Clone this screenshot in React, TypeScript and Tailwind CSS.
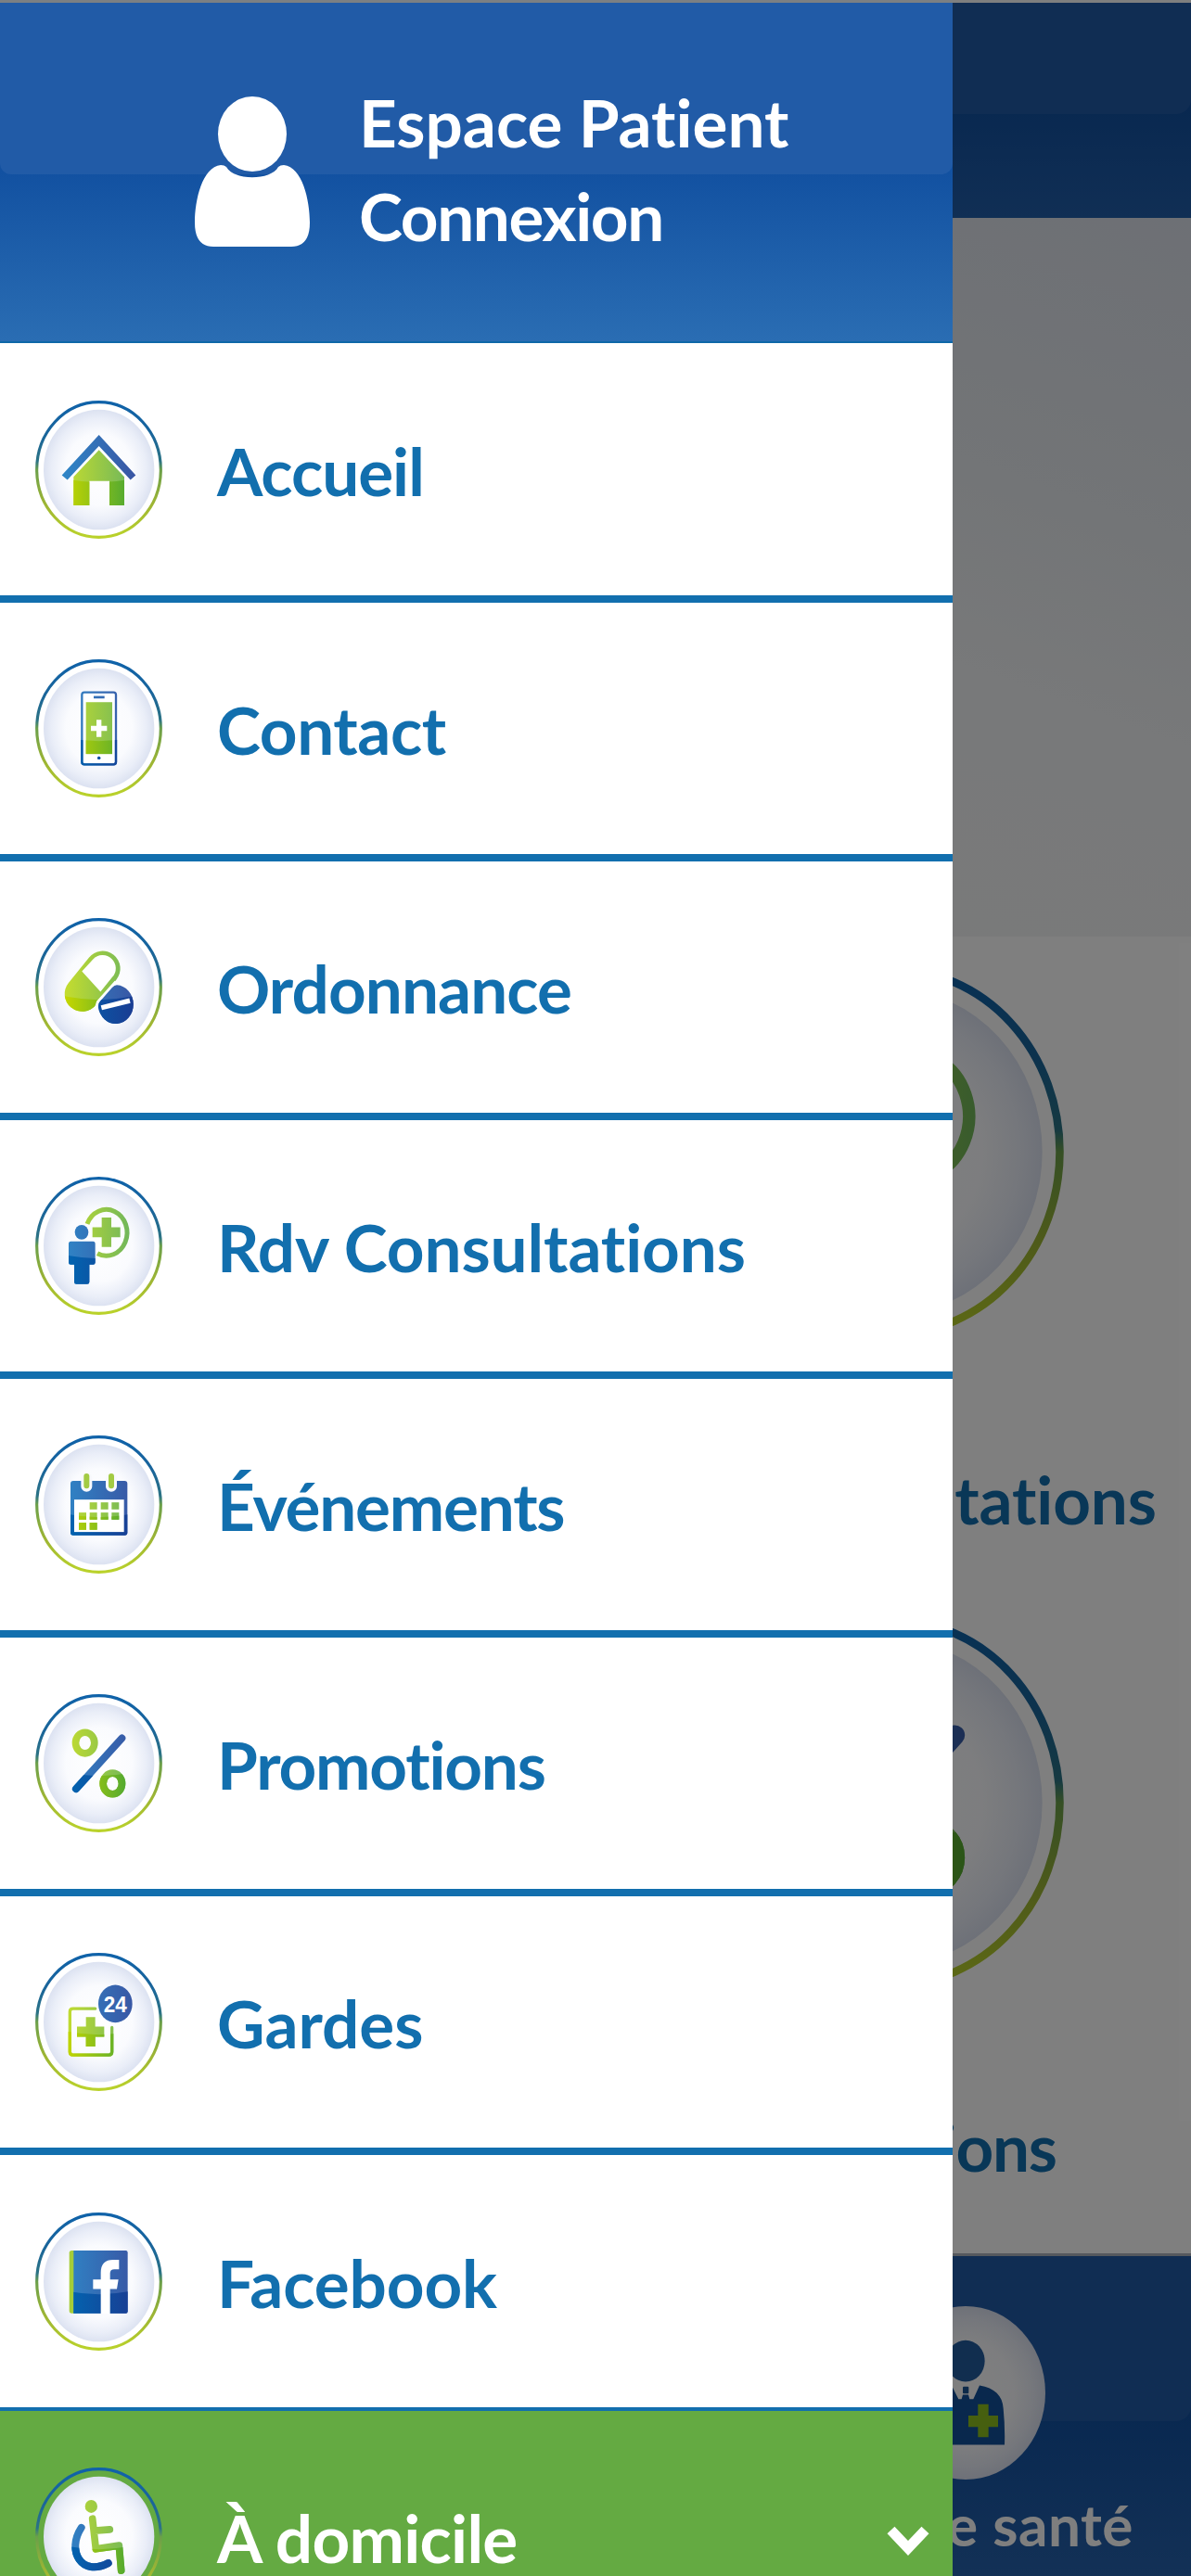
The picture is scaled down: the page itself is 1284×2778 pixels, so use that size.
import { ReactNode } from "react";
import clsx from "clsx";

interface MenuEntry {
	label: string;
	icon: ReactNode;
	tracking: string;
}

const menu: MenuEntry[] = [
	{ label: "Accueil", icon: <HomeIcon />, tracking: "tracking-[-1px]" },
	{ label: "Contact", icon: <PhoneIcon />, tracking: "tracking-[-0.4px]" },
	{ label: "Ordonnance", icon: <PillIcon />, tracking: "tracking-[-0.9px]" },
	{ label: "Rdv Consultations", icon: <DoctorIcon />, tracking: "tracking-[-0.1px]" },
	{ label: "Événements", icon: <CalendarIcon />, tracking: "tracking-[-1.2px]" },
	{ label: "Promotions", icon: <PercentIcon />, tracking: "tracking-[-1.2px]" },
	{ label: "Gardes", icon: <GuardIcon />, tracking: "tracking-[0px]" },
	{ label: "Facebook", icon: <FacebookIcon />, tracking: "tracking-[-0.1px]" },
];

export default function App() {
	return (
		<div className="relative w-[1284px] h-[2778px] overflow-hidden bg-white font-['Lato',sans-serif] font-bold [font-variant-ligatures:none]">
			<Gradients />
			<HomePage />
			<div className="absolute inset-0 bg-black/50" />
			<Drawer />
		</div>
	);
}

function Drawer() {
	return (
		<aside className="absolute left-0 top-0 flex flex-col w-[1027px] h-[2778px] overflow-hidden bg-white">
			<div className="h-[3px] shrink-0 bg-[#7c8083]" />
			<header className="relative flex flex-row h-[367px] shrink-0 pl-[210px] pt-[101px] bg-linear-to-b from-[#1251a1] from-50% to-[#2a6db3] border-b-2 border-[#0f68a8] text-white">
				<div className="absolute inset-x-0 top-0 h-[185px] rounded-b-[12px] bg-[#215ba7]" />
				<svg viewBox="0 0 124 162" className="relative w-[124px] h-[162px]" fill="currentColor">
					<ellipse cx="62" cy="40.5" rx="37" ry="40.5" />
					<path d="M28 74Q32 74 34 76C42 91 82 91 90 76Q92 74 96 74C116 76 124 112 124 136Q124 162 104 162H20Q0 162 0 136C0 112 8 76 28 74Z" />
				</svg>
				<div className="relative flex flex-col pl-[53px] -mt-[23px] text-[71px] leading-[101px] whitespace-nowrap">
					<span className="tracking-[0px]">Espace Patient</span>
					<span className="tracking-[-1.4px]">Connexion</span>
				</div>
			</header>

			<nav className="flex flex-col">
				{menu.map((entry) => (
					<div
						key={entry.label}
						className="flex flex-row items-center h-[279px] pl-[38px] border-b-8 border-[#126fae] text-[#126fae] first:h-[280px] last:h-[276px] last:border-b-4"
					>
						<IconFrame className="w-[137px] h-[149px] shrink-0">{entry.icon}</IconFrame>
						<span className={clsx("pl-[59px] pt-[2px] text-[71px] leading-none whitespace-nowrap", entry.tracking)}>
							{entry.label}
						</span>
					</div>
				))}
			</nav>

			<div className="flex flex-row items-center h-[270px] shrink-0 pl-[38px] pr-[25px] bg-[#64aa42] text-white">
				<IconFrame className="w-[137px] h-[149px] shrink-0">
					<WheelchairIcon />
				</IconFrame>
				<span className="flex-1 pl-[59px] pt-[2px] text-[71px] leading-none whitespace-nowrap tracking-[-0.7px]">
					À domicile
				</span>
				<svg viewBox="0 0 46 34" className="w-[46px] h-[34px] mt-[8px]">
					<path d="M4.500 6.500L23 26L41.500 6.500" fill="none" stroke="white" strokeWidth="11" strokeLinejoin="miter" />
				</svg>
			</div>
		</aside>
	);
}

// Home screen, dimmed while the drawer is open
function HomePage() {
	return (
		<div className="flex flex-col w-full h-full text-[#126fae]">
			<div className="relative h-[235px] shrink-0 bg-linear-to-b from-[#1251a1] from-50% to-[#215eaa]">
				<div className="absolute inset-x-0 top-0 h-[123px] rounded-b-[16px] bg-[#215ba7]" />
				<div className="absolute inset-x-0 top-0 h-[3px] bg-white" />
			</div>
			<div className="h-[775px] shrink-0 bg-[linear-gradient(200deg,#dbe0ea_0%,#e6eaee_28%,#f0f2f4_46%,#f3f4f5_68%,#e9eaf1_100%)]" />
			<div className="grid grid-cols-2 h-[1420px] shrink-0">
				<div />
				<div className="flex flex-col items-center pt-[31px] pr-[2px] text-[71px] leading-none whitespace-nowrap">
					<IconFrame className="w-[369px] h-[402px] shrink-0">
						<DoctorIcon />
					</IconFrame>
					<span className="h-[300px] shrink-0 pt-[138px] tracking-[-0.1px]">Rdv Consultations</span>
					<IconFrame className="w-[369px] h-[402px] shrink-0">
						<PercentIcon />
					</IconFrame>
					<span className="pt-[134px] tracking-[-1.2px]">Promotions</span>
				</div>
			</div>
			<footer className="relative flex flex-col items-end h-[348px] shrink-0 border-t-3 border-[#acb2bc] bg-linear-to-b from-[#1251a1] from-50% to-[#2662ad] text-white">
				<div className="absolute inset-x-0 top-0 h-[178px] rounded-b-[16px] bg-[#215ba7]" />
				<div className="relative flex flex-col items-center w-[486px] pt-[54px]">
					<HealthIcon />
					<span className="pt-[17px] text-[62px] leading-none whitespace-nowrap tracking-[0.5px]">Espace santé</span>
				</div>
			</footer>
		</div>
	);
}

// Shared paints. All pictograms are drawn on the same 411x448 grid.
function Gradients() {
	return (
		<svg className="absolute w-0 h-0">
			<defs>
				<linearGradient id="ring" x1="0" y1="0" x2="0" y2="1">
					<stop offset="0" stopColor="#0f62a9" />
					<stop offset="0.25" stopColor="#1a659a" />
					<stop offset="0.44" stopColor="#2c7384" />
					<stop offset="0.5" stopColor="#6b9f4a" />
					<stop offset="0.75" stopColor="#9db534" />
					<stop offset="1" stopColor="#bad22a" />
				</linearGradient>
				<radialGradient id="disc">
					<stop offset="0" stopColor="#ffffff" />
					<stop offset="0.6" stopColor="#fafbfe" />
					<stop offset="0.85" stopColor="#eaeef8" />
					<stop offset="1" stopColor="#dce2f1" />
				</radialGradient>
				<linearGradient id="greenLight" gradientUnits="userSpaceOnUse" x1="100" y1="0" x2="310" y2="0">
					<stop offset="0" stopColor="#c3dc2f" />
					<stop offset="1" stopColor="#6fb65c" />
				</linearGradient>
				<linearGradient id="greenDark" gradientUnits="userSpaceOnUse" x1="100" y1="0" x2="310" y2="0">
					<stop offset="0" stopColor="#c4d600" />
					<stop offset="1" stopColor="#4aa635" />
				</linearGradient>
				<linearGradient id="blueLight" gradientUnits="userSpaceOnUse" x1="90" y1="0" x2="320" y2="0">
					<stop offset="0" stopColor="#2f86c7" />
					<stop offset="1" stopColor="#3956a4" />
				</linearGradient>
				<linearGradient id="blueDark" gradientUnits="userSpaceOnUse" x1="90" y1="0" x2="320" y2="0">
					<stop offset="0" stopColor="#0068b3" />
					<stop offset="1" stopColor="#1a3c92" />
				</linearGradient>
				<clipPath id="shade">
					<path d="M0 225Q206 305 411 225V448H0Z" />
				</clipPath>
			</defs>
		</svg>
	);
}

function IconFrame({ className, children }: { className: string; children: ReactNode }) {
	return (
		<svg viewBox="0 0 411 448" preserveAspectRatio="none" className={className}>
			<ellipse cx="205.5" cy="224" rx="200.5" ry="219" fill="none" stroke="url(#ring)" strokeWidth="9.5" />
			<ellipse cx="206" cy="224" rx="179" ry="195" fill="url(#disc)" />
			{children}
		</svg>
	);
}

// Paints the shape twice: light tone above the gloss curve, dark tone below
function Green({ children }: { children: ReactNode }) {
	return (
		<>
			<g fill="url(#greenLight)">{children}</g>
			<g fill="url(#greenDark)" clipPath="url(#shade)">
				{children}
			</g>
		</>
	);
}

function GreenLine({ width, children }: { width: number; children: ReactNode }) {
	return (
		<g fill="none" strokeWidth={width} strokeLinecap="round" strokeLinejoin="round">
			<g stroke="url(#greenLight)">{children}</g>
			<g stroke="url(#greenDark)" clipPath="url(#shade)">
				{children}
			</g>
		</g>
	);
}

function Blue({ children }: { children: ReactNode }) {
	return (
		<>
			<g fill="url(#blueLight)">{children}</g>
			<g fill="url(#blueDark)" clipPath="url(#shade)">
				{children}
			</g>
		</>
	);
}

function BlueLine({ width, children }: { width: number; children: ReactNode }) {
	return (
		<g fill="none" strokeWidth={width} strokeLinecap="round" strokeLinejoin="round">
			<g stroke="url(#blueLight)">{children}</g>
			<g stroke="url(#blueDark)" clipPath="url(#shade)">
				{children}
			</g>
		</g>
	);
}

function HomeIcon() {
	return (
		<>
			<path d="M206 111L325 242L308 257L206 147L104 257L86 242Z" fill="url(#blueLight)" />
			<Green>
				<path d="M206 160L288 247V340H240V261H175V340H124V247Z" />
			</Green>
		</>
	);
}

function PhoneIcon() {
	return (
		<>
			<rect x="151" y="107" width="110" height="234" rx="8" fill="white" />
			<BlueLine width={7}>
				<rect x="151" y="107" width="110" height="234" rx="8" />
			</BlueLine>
			<Blue>
				<rect x="189" y="119" width="35" height="8" />
				<circle cx="206" cy="320" r="5" />
			</Blue>
			<Green>
				<rect x="164" y="139" width="85" height="168" />
			</Green>
			<path d="M198 196H214V216H232V232H214V252H198V232H180V216H198Z" fill="white" />
		</>
	);
}

function PillIcon() {
	return (
		<>
			<GreenLine width={114}>
				<path d="M152 246L218 164" />
			</GreenLine>
			<path d="M151 173L187 134A42 42 0 0 1 249 192L211 239Z" fill="white" />
			<path d="M260 206L202 272L196 292" fill="none" stroke="white" strokeWidth="8" />
			<Blue>
				<path d="M264 217A57 63 0 1 1 204 289Q203 277 210 270L248 226Q256 217 264 217Z" />
			</Blue>
			<path d="M214 291L306 268" stroke="white" strokeWidth="16" />
		</>
	);
}

function DoctorIcon() {
	return (
		<>
			<g fill="none" stroke="url(#greenLight)" strokeWidth="15">
				<path d="M168 153A67 75 0 1 1 201 249" />
			</g>
			<path d="M215 132H246V164H275V196H246V228H215V196H185V164H215Z" fill="url(#greenLight)" />
			<Blue>
				<ellipse cx="150" cy="180" rx="22" ry="24" />
				<path d="M115 210H187Q194 210 194 218V278Q194 285 187 285H175V341Q175 348 168 348H133Q126 348 126 341V285H115Q108 285 108 278V218Q108 210 115 210Z" />
			</Blue>
		</>
	);
}

const days = [
	[176, 217],
	[212, 217],
	[247, 217],
	[141, 250],
	[176, 250],
	[212, 250],
	[247, 250],
	[141, 283],
	[176, 283],
];

function CalendarIcon() {
	return (
		<>
			<Blue>
				<rect x="114" y="147" width="184" height="177" rx="9" />
			</Blue>
			<rect x="126" y="208" width="161" height="105" fill="white" />
			<path d="M166 140V165M246 140V165" stroke="#f8f9fd" strokeWidth="36" strokeLinecap="round" />
			<g stroke="#a3cb43" strokeWidth="18" strokeLinecap="round">
				<path d="M166 132V163M246 132V163" />
			</g>
			<Green>
				{days.map(([x, y]) => (
					<rect key={`${x}-${y}`} x={x} y={y} width="24" height="23" />
				))}
			</Green>
		</>
	);
}

function PercentIcon() {
	return (
		<>
			<GreenLine width={23}>
				<ellipse cx="161" cy="158" rx="30.5" ry="34" />
				<ellipse cx="250" cy="290" rx="30.5" ry="34" />
			</GreenLine>
			<BlueLine width={24}>
				<path d="M132 307L280 143" />
			</BlueLine>
		</>
	);
}

function GuardIcon() {
	return (
		<>
			<GreenLine width={10}>
				<path d="M194 181H122Q112 181 112 191V321Q112 331 122 331H238Q248 331 248 321V242" />
			</GreenLine>
			<Green>
				<path d="M164 208H194V239H223V272H194V304H164V272H135V239H164Z" />
			</Green>
			<ellipse cx="259" cy="165" rx="55" ry="61" fill="url(#blueLight)" />
			<text
				x="259"
				y="191"
				textAnchor="middle"
				textLength="75"
				lengthAdjust="spacingAndGlyphs"
				fontSize="71"
				fill="white"
				className="font-['Liberation_Sans',sans-serif] font-bold"
			>
				24
			</text>
		</>
	);
}

function FacebookIcon() {
	return (
		<>
			<rect x="110" y="123" width="40" height="204" rx="8" fill="#a5cd39" />
			<Blue>
				<path d="M124 123H293Q299 123 299 130V320Q299 327 293 327H124Z" />
			</Blue>
			<path
				d="M212 328V248H187V217H212V195Q212 153 252 153H271V184H256Q242 184 242 197V217H269L264 248H242V328Z"
				fill="white"
			/>
		</>
	);
}

function WheelchairIcon() {
	return (
		<>
			<ellipse cx="181" cy="126" rx="20" ry="21" fill="url(#greenLight)" />
			<GreenLine width={23}>
				<path d="M185 166L196 264L271 253L278 334M192 205L241 201" />
			</GreenLine>
			<BlueLine width={24}>
				<path d="M149 195C100 270 150 355 236 310" />
			</BlueLine>
		</>
	);
}

function HealthIcon() {
	return (
		<svg viewBox="0 0 516 560" className="w-[172px] h-[187px]" preserveAspectRatio="none">
			<ellipse cx="258" cy="280" rx="258" ry="280" fill="url(#disc)" />
			<ellipse cx="258" cy="177" rx="62" ry="67" fill="#225c9f" />
			<path
				d="M206 257C160 268 138 290 136 330Q130 390 132 448H384Q386 390 380 330C378 290 352 264 303 256L283 300H271L267 286H249L245 300H235L213 257Z"
				fill="#12509a"
			/>
			<rect x="249" y="260" width="19" height="22" rx="3" fill="#1a5495" />
			<path d="M298 317H332V353H363V390H332V423H298V390H267V353H298Z" fill="#8cbf1e" />
		</svg>
	);
}
